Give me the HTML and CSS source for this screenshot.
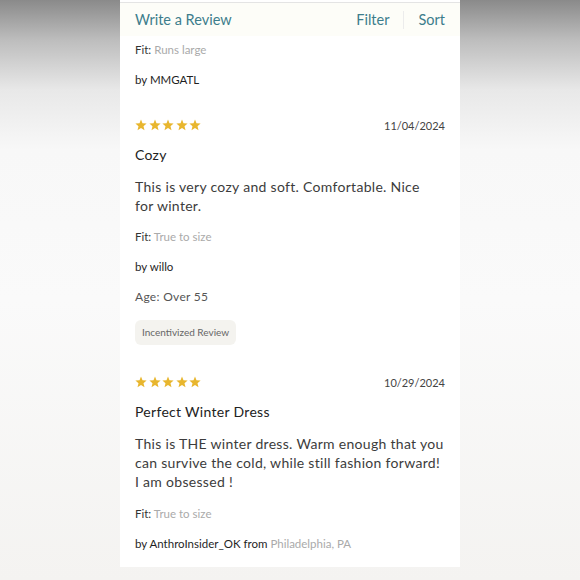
FILE: index.html
```html
<!DOCTYPE html>
<html lang="en">
<head>
    <meta charset="UTF-8">
    <meta name="viewport" content="width=device-width, initial-scale=1.0">
    <title>Reviews</title>
    <link rel="stylesheet" href="styles.css">
</head>
<body>
    <svg class="defs" width="0" height="0">
        <symbol id="star" viewBox="0 0 12 12">
            <polygon points="6,0.6 7.5,4.3 11.6,4.6 8.5,7.2 9.5,11.2 6,9 2.5,11.2 3.5,7.2 0.4,4.6 4.5,4.3"/>
        </symbol>
    </svg>

    <div class="panel">
        <div class="toolbar">
            <a class="toolbar-link" href="#">Write a Review</a>
            <div class="toolbar-right">
                <a class="toolbar-link" href="#">Filter</a>
                <span class="toolbar-sep"></span>
                <a class="toolbar-link" href="#">Sort</a>
            </div>
        </div>

        <!-- tail of the previous review -->
        <div class="review review-tail">
            <p class="meta"><span class="label">Fit:</span> <span class="muted">Runs large</span></p>
            <p class="author">by MMGATL</p>
        </div>

        <div class="review">
            <div class="review-head">
                <span class="stars">
                    <svg><use href="#star"/></svg><svg><use href="#star"/></svg><svg><use href="#star"/></svg><svg><use href="#star"/></svg><svg><use href="#star"/></svg>
                </span>
                <span class="date">11/04/2024</span>
            </div>
            <h3 class="review-title">Cozy</h3>
            <p class="review-body">This is very cozy and soft. Comfortable. Nice<br>for winter.</p>
            <p class="meta"><span class="label">Fit:</span> <span class="muted">True to size</span></p>
            <p class="author">by willo</p>
            <p class="age">Age: Over 55</p>
            <span class="badge">Incentivized Review</span>
        </div>

        <div class="review">
            <div class="review-head">
                <span class="stars">
                    <svg><use href="#star"/></svg><svg><use href="#star"/></svg><svg><use href="#star"/></svg><svg><use href="#star"/></svg><svg><use href="#star"/></svg>
                </span>
                <span class="date">10/29/2024</span>
            </div>
            <h3 class="review-title">Perfect Winter Dress</h3>
            <p class="review-body">This is THE winter dress. Warm enough that you can survive the cold, while still fashion forward! I am obsessed !</p>
            <p class="meta"><span class="label">Fit:</span> <span class="muted">True to size</span></p>
            <p class="author">by AnthroInsider_OK from <span class="muted">Philadelphia, PA</span></p>
        </div>
    </div>
</body>
</html>
```

FILE: styles.css
```css
body {
    margin: 0;
    min-height: 580px;
    font-family: Lato, 'Open Sans', sans-serif;
    color: #2a2a2a;
    background: linear-gradient(to bottom, #8a8a8a 0, #bdbdbd 40px, #e8e8e8 90px, #f8f8f8 150px, #fafafa 300px, #f4f3f1 100%);
}

.defs {
    position: absolute;
}

.panel {
    width: 340px;
    margin: 0 auto;
    padding: 2px 0 15px;
    background: #fff;
}

.toolbar {
    display: flex;
    justify-content: space-between;
    align-items: center;
    height: 33px;
    padding: 0 15px;
    border-top: 1px solid #e4e4e4;
    background: #fdfdf8;
}

.toolbar-right {
    display: flex;
    align-items: center;
}

.toolbar-link {
    font-size: 14.5px;
    color: #3d7d8c;
    text-decoration: none;
}

.toolbar-sep {
    width: 1px;
    height: 18px;
    margin: 0 14px;
    background: #ececec;
}

.review {
    padding: 29px 15px 0;
}

.review-tail {
    padding-top: 6px;
}

.review p {
    margin: 0;
}

.review-head {
    display: flex;
    justify-content: space-between;
    align-items: center;
    height: 16px;
}

.stars {
    display: flex;
    gap: 1.5px;
}

.stars svg {
    width: 12px;
    height: 12px;
    fill: #e8b62e;
}

.date {
    font-size: 11px;
    color: #444;
}

.review-title {
    margin: 13px 0 0;
    font-size: 14px;
    font-weight: 400;
    line-height: 18px;
    color: #222;
    letter-spacing: 0.3px;
}

.review-body {
    margin-top: 14px !important;
    font-size: 14px;
    line-height: 18.7px;
    color: #3c3c3c;
    letter-spacing: 0.3px;
}

.meta,
.author,
.age {
    font-size: 11.5px;
    line-height: 16px;
    margin-top: 14px !important;
}

.review-tail .meta {
    margin-top: 0 !important;
}

.label {
    color: #333;
}

.muted {
    color: #aaa;
}

.author {
    color: #1f1f1f;
}

.age {
    font-size: 12px;
    color: #555;
    letter-spacing: 0.3px;
}

.badge {
    display: inline-block;
    margin-top: 15px;
    padding: 0 7px;
    height: 25px;
    line-height: 25px;
    border-radius: 6px;
    background: #f4f3ef;
    font-size: 10px;
    color: #666;
}
```
